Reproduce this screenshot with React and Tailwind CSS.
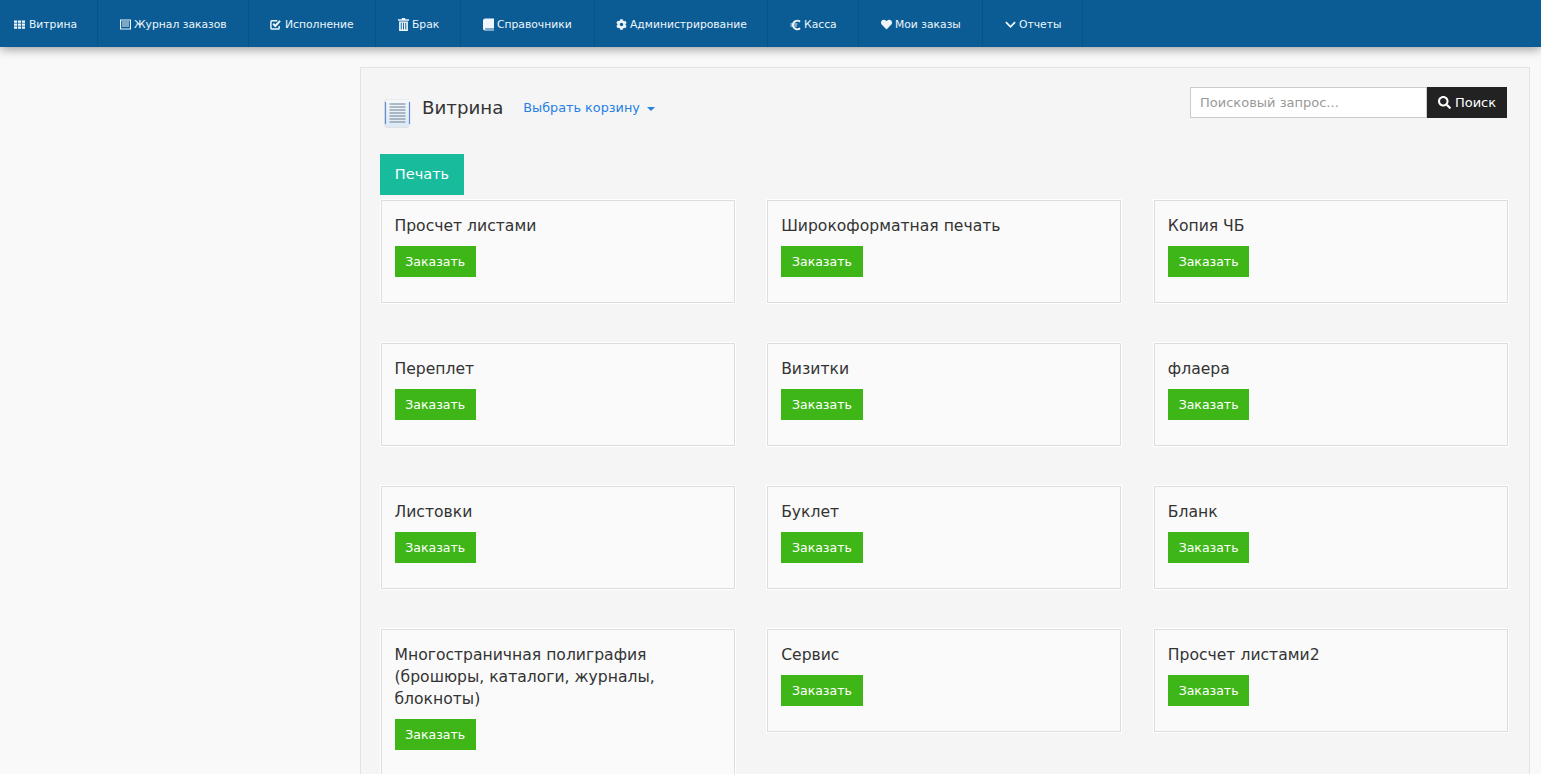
import { FaCog, FaHeart, FaSearch } from "react-icons/fa";

function ThIcon() {
  return (
    <svg viewBox="0 0 12 12" className="h-[11px] w-[11px]" fill="currentColor">
      <path d="M0 1.5h3.4v2.5H0zM4.3 1.5h3.4v2.5H4.3zM8.6 1.5H12v2.5H8.6zM0 4.8h3.4v2.5H0zM4.3 4.8h3.4v2.5H4.3zM8.6 4.8H12v2.5H8.6zM0 8.1h3.4v2.5H0zM4.3 8.1h3.4v2.5H4.3zM8.6 8.1H12v2.5H8.6z" />
    </svg>
  );
}

function ListAltIcon() {
  return (
    <svg viewBox="0 0 12 12" className="h-[11px] w-[11px]" fill="currentColor">
      <path fillRule="evenodd" d="M0 0.5h12v11H0z M1.2 1.7v8.6h9.6V1.7z" />
      <path d="M2.2 2.8h7.6v1.1H2.2zM2.2 5h7.6v1.1H2.2zM2.2 7.2h7.6v1.1H2.2z" />
    </svg>
  );
}

function CheckIcon() {
  return (
    <svg viewBox="0 0 12 12" className="h-[11px] w-[11px]" fill="none" stroke="currentColor">
      <path strokeWidth="1.6" d="M10 7.5V10a1 1 0 0 1-1 1H2a1 1 0 0 1-1-1V3a1 1 0 0 1 1-1h6" />
      <path strokeWidth="2.2" d="M3.5 5.2l2.3 2.4L11 2" />
    </svg>
  );
}

function TrashIcon() {
  return (
    <svg viewBox="0 0 12 14" className="h-[13px] w-[11px]" fill="currentColor">
      <path d="M4.2 0h3.6v1.2H12V3H0V1.2h4.2z" />
      <path fillRule="evenodd" d="M1.2 3.8h9.6V14H1.2z M3 5v7.5h1V5z M5.5 5v7.5h1V5z M8 5v7.5h1V5z" />
    </svg>
  );
}

function BookIcon() {
  return (
    <svg viewBox="0 0 12 13" className="h-[13px] w-[11px]" fill="currentColor">
      <path d="M2.5 0H12v10.8H2.6a.8.8 0 0 0 0 1.2H12v1H2.2A2.2 2.2 0 0 1 0 10.8V2.5A2.5 2.5 0 0 1 2.5 0z" />
    </svg>
  );
}

function EuroIcon() {
  return (
    <svg viewBox="0 0 12 12" className="h-[12px] w-[11px]" fill="none" stroke="currentColor" strokeWidth="2">
      <path d="M11 2.4A4.8 4.8 0 0 0 3.2 6 4.8 4.8 0 0 0 11 9.6" />
      <path strokeWidth="1.3" d="M0.5 4.9h7.5M0.5 7.1h7" />
    </svg>
  );
}

function ChevronIcon() {
  return (
    <svg viewBox="0 0 12 12" className="h-[11px] w-[11px]" fill="none" stroke="currentColor" strokeWidth="2">
      <path d="M1 3.5l5 5 5-5" />
    </svg>
  );
}

function DocIcon() {
  return (
    <svg viewBox="0 0 28 32" className="h-8 w-7">
      <defs>
        <linearGradient id="docFill" x1="0" y1="0" x2="0" y2="1">
          <stop offset="0" stopColor="#f4f8fc" />
          <stop offset="1" stopColor="#dce9f6" />
        </linearGradient>
      </defs>
      <rect x="1" y="2" width="26" height="29" rx="4" fill="#000" opacity="0.08" />
      <rect x="2.5" y="2.5" width="24" height="27.5" rx="3" fill="url(#docFill)" />
      <path d="M2.5 5v22M26.5 5v22" stroke="#5f8fd0" strokeWidth="1.2" />
      <path d="M6.5 7h16M6.5 10h16M6.5 13h16M6.5 16h16M6.5 19h16M6.5 22h16M6.5 25h16" stroke="#6c7d8e" strokeWidth="1" />
    </svg>
  );
}

const navItems = [
  { label: "Витрина", icon: <ThIcon />, cls: "w-[98px] pl-[14px] gap-[4px]" },
  { label: "Журнал заказов", icon: <ListAltIcon />, cls: "w-[151px] pl-[22px] gap-[3px]" },
  { label: "Исполнение", icon: <CheckIcon />, cls: "w-[127px] pl-[21px] gap-[4px]" },
  { label: "Брак", icon: <TrashIcon />, cls: "w-[85px] pl-[22px] gap-[3px]" },
  { label: "Справочники", icon: <BookIcon />, cls: "w-[134px] pl-[22px] gap-[3px]" },
  { label: "Администрирование", icon: <FaCog className="h-[11px] w-[11px]" />, cls: "w-[173px] pl-[21px] gap-[3px]" },
  { label: "Касса", icon: <EuroIcon />, cls: "w-[91px] pl-[22px] gap-[3px]" },
  { label: "Мои заказы", icon: <FaHeart className="h-[11px] w-[11px]" />, cls: "w-[124px] pl-[22px] gap-[3px]" },
  { label: "Отчеты", icon: <ChevronIcon />, cls: "w-[100px] pl-[22px] gap-[3px]" },
];

const products = [
  "Просчет листами",
  "Широкоформатная печать",
  "Копия ЧБ",
  "Переплет",
  "Визитки",
  "флаера",
  "Листовки",
  "Буклет",
  "Бланк",
  "Многостраничная полиграфия (брошюры, каталоги, журналы, блокноты)",
  "Сервис",
  "Просчет листами2",
];

function ProductCard({ title }) {
  return (
    <div className="border border-[#ddd] bg-[#fafafa] px-[13px] pt-[14px] pb-[25px] shadow-[0_0_0_1px_#fff]">
      <h3 className="text-[15.6px] leading-[22px] font-normal text-[#333]">{title}</h3>
      <button
        type="button"
        className="mt-[9px] block h-[31px] w-[81.5px] bg-[#3fb618] pt-[1px] text-[12.5px] text-white"
      >
        Заказать
      </button>
    </div>
  );
}

export default function App() {
  return (
    <div className="h-screen overflow-hidden bg-[#f9f9f9] font-['DejaVu_Sans',sans-serif]">
      <nav className="relative z-10 flex h-[47px] bg-[#0b5c94] text-[10.75px] text-[#eef6fb] shadow-[0_2px_10px_rgba(0,0,0,0.4)]">
        {navItems.map((item) => (
          <div
            key={item.label}
            className={`flex items-center border-r border-[#0a5285] pt-[2px] ${item.cls}`}
          >
            {item.icon}
            <span className="pt-[1px]">{item.label}</span>
          </div>
        ))}
      </nav>

      <div className="flex pt-5">
        <div className="w-[360px] shrink-0" />
        <main className="w-[1170px] shrink-0 border border-[#e3e3e3] bg-[#f5f5f5] pt-[19px] pr-[22px] pl-[19px]">
          <div className="flex h-[67px] items-start justify-between">
            <div className="flex items-start pt-[10px] pl-[3px]">
              <DocIcon />
              <div className="flex h-[22px] items-center">
                <h1 className="ml-[11px] text-[18.2px] font-normal text-[#333]">Витрина</h1>
                <a className="ml-[20px] flex items-center gap-[7px] text-[12.8px] text-[#2780e3]">
                  Выбрать корзину
                  <span className="mt-[1px] h-0 w-0 border-x-4 border-t-4 border-x-transparent border-t-[#2780e3]" />
                </a>
              </div>
            </div>
            <div className="flex">
              <input
                placeholder="Поисковый запрос..."
                className="h-[31px] w-[237px] border border-[#ccc] bg-white px-[9px] text-[13px] text-[#333] placeholder:text-[#999]"
              />
              <button
                type="button"
                className="flex h-[31px] w-[80px] items-center justify-center gap-[4px] bg-[#222] text-[13px] text-white"
              >
                <FaSearch className="h-[13px] w-[13px]" />
                Поиск
              </button>
            </div>
          </div>

          <div className="flex h-[41px] w-[84px] items-center justify-center bg-[#18bc9c] pt-[1px] text-[14.5px] text-white">
            Печать
          </div>

          <div className="mt-[5px] -mr-[1px] grid grid-cols-3 items-start gap-x-[32.5px] gap-y-[40px] pl-[0.5px]">
            {products.map((p) => (
              <ProductCard key={p} title={p} />
            ))}
          </div>
        </main>
      </div>
    </div>
  );
}
